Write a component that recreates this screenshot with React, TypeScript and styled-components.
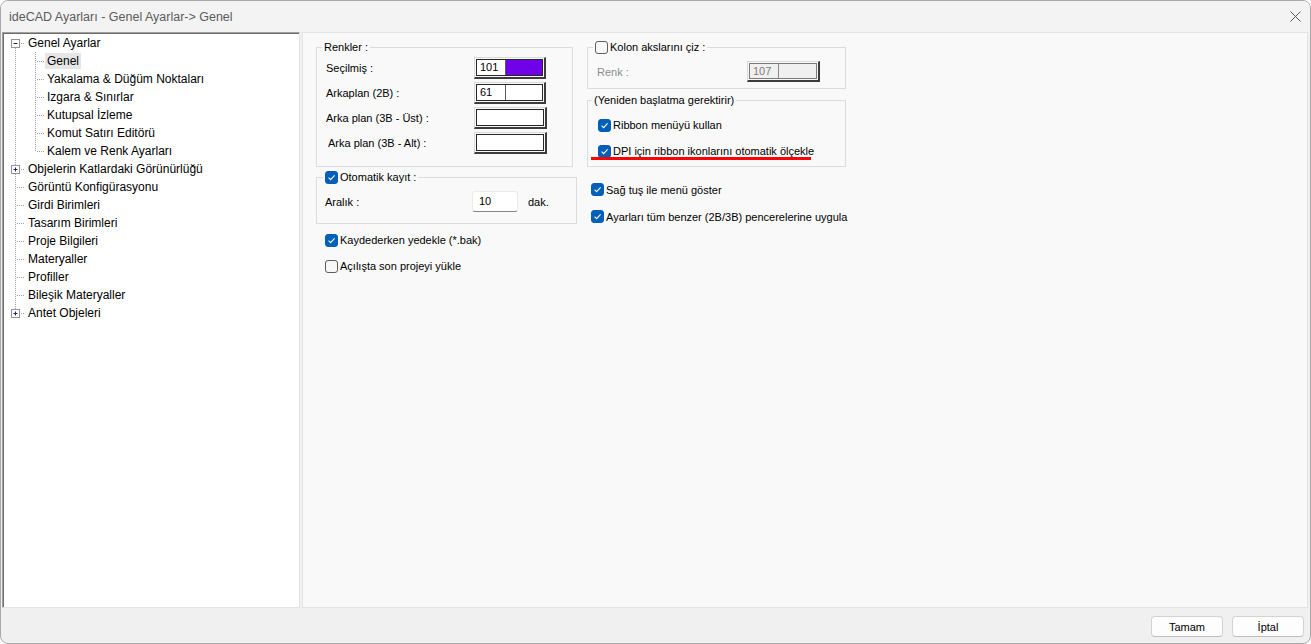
import React from "react";
import styled, { createGlobalStyle } from "styled-components";

const Global = createGlobalStyle`
  html, body { margin: 0; padding: 0; background: #ffffff; }
  body { font-family: "Liberation Sans", Arial, sans-serif; color: #000; }
  * { box-sizing: border-box; }
`;

const Window = styled.div`
  width: 1311px;
  height: 644px;
  border: 1px solid #a9a9a9;
  border-radius: 8px;
  background: #f0f0f0;
  display: flex;
  flex-direction: column;
  overflow: hidden;
`;

const TitleBar = styled.div`
  height: 31px;
  flex: none;
  display: flex;
  align-items: center;
  justify-content: space-between;
  padding: 0 9px 0 8px;
  background: #f3f3f3;
  font-size: 12.5px;
  color: #5c5c5c;
`;

const Main = styled.div`
  flex: 1;
  min-height: 0;
  display: flex;
  gap: 2px;
  padding: 0 2px 0 1px;
`;

const TreePanel = styled.div`
  width: 298px;
  flex: none;
  background: #ffffff;
  border-style: solid;
  border-width: 1px;
  border-color: #a0a0a0 #e3e3e3 #e3e3e3 #a0a0a0;
  box-shadow: inset 1px 1px 0 #6d6d6d;
  padding: 1px 0 0 1px;
`;

const TreeRow = styled.div`
  height: 18px;
  display: flex;
  align-items: center;
  font-size: 12px;
`;

const TreeLabel = styled.span<{ $selected?: boolean }>`
  height: 16px;
  line-height: 16px;
  padding: 0 2px;
  white-space: nowrap;
  background: ${(p) => (p.$selected ? "#e6e6e6" : "transparent")};
`;

const ContentPanel = styled.div`
  flex: 1;
  background: #f9f9f9;
  border: 1px solid #e3e3e3;
  display: flex;
  gap: 10px;
  padding: 7px 0 0 13px;
  font-size: 11px;
`;

const Column = styled.div<{ $w: number }>`
  width: ${(p) => p.$w}px;
  flex: none;
  display: flex;
  flex-direction: column;
  align-items: flex-start;
`;

const Group = styled.fieldset<{ $w: number; $h: number; $pad: string; $mt?: number }>`
  margin: ${(p) => p.$mt ?? 0}px 0 0 0;
  width: ${(p) => p.$w}px;
  height: ${(p) => p.$h}px;
  min-width: 0;
  border: 1px solid #dcdcdc;
  padding: ${(p) => p.$pad};
`;

const Legend = styled.legend<{ $ml: number }>`
  margin-left: ${(p) => p.$ml}px;
  padding: 0 2px;
  height: 14px;
  line-height: 14px;
  display: flex;
  align-items: center;
  gap: 2px;
  font-size: 11px;
  white-space: nowrap;
`;

const FieldGrid = styled.div<{ $cols: string; $row: number }>`
  display: grid;
  grid-template-columns: ${(p) => p.$cols};
  grid-auto-rows: ${(p) => p.$row}px;
  align-items: center;
`;

const FieldLabel = styled.span<{ $muted?: boolean; $indent?: number }>`
  padding-left: ${(p) => p.$indent ?? 0}px;
  color: ${(p) => (p.$muted ? "#8d8d8d" : "#000")};
  white-space: nowrap;
`;

const Swatch = styled.div<{ $h?: number; $w?: number }>`
  width: ${(p) => p.$w ?? 73}px;
  height: ${(p) => p.$h ?? 22}px;
  border-style: solid;
  border-width: 1px 2px 2px 1px;
  border-color: #d9d9d9 #3c3c3c #3c3c3c #d9d9d9;
  padding: 1px;
`;

const SwatchInner = styled.div<{ $disabled?: boolean }>`
  height: 100%;
  display: flex;
  border: 1px solid ${(p) => (p.$disabled ? "#7a7a7a" : "#262626")};
  background: ${(p) => (p.$disabled ? "#f0f0f0" : "#ffffff")};
`;

const SwatchNum = styled.span<{ $disabled?: boolean }>`
  width: 29px;
  flex: none;
  border-right: 1px solid ${(p) => (p.$disabled ? "#8a8a8a" : "#5a5a5a")};
  padding-left: 3px;
  font-size: 11px;
  line-height: 15px;
  color: ${(p) => (p.$disabled ? "#7d7d7d" : "#000")};
`;

const SwatchFill = styled.span<{ $color: string }>`
  flex: 1;
  background: ${(p) => p.$color};
`;

const NumberInput = styled.div`
  width: 46px;
  height: 21px;
  background: #ffffff;
  border: 1px solid #ececec;
  border-bottom-color: #868686;
  border-radius: 3px;
  padding-left: 6px;
  line-height: 19px;
  font-size: 11px;
`;

const CheckRow = styled.div<{ $h: number; $pl: number }>`
  position: relative;
  height: ${(p) => p.$h}px;
  padding-left: ${(p) => p.$pl}px;
  display: flex;
  align-items: center;
  gap: 2px;
  white-space: nowrap;
`;

const Box = styled.span<{ $checked?: boolean }>`
  width: 13px;
  height: 13px;
  flex: none;
  border-radius: 3px;
  display: inline-flex;
  align-items: center;
  justify-content: center;
  background: ${(p) => (p.$checked ? "#005fb8" : "#f7f7f7")};
  border: 1px solid ${(p) => (p.$checked ? "#005fb8" : "#5e5e5e")};
`;

const Underline = styled.span`
  position: absolute;
  left: -7px;
  top: 19px;
  width: 220px;
  height: 3px;
  background: #ff0000;
`;

const Footer = styled.div`
  height: 35px;
  flex: none;
  display: flex;
  justify-content: flex-end;
  align-items: flex-start;
  gap: 9px;
  padding: 8px 6px 0 0;
`;

const Button = styled.button`
  width: 72px;
  height: 21px;
  background: #fdfdfd;
  border: 1px solid #d3d3d3;
  border-bottom-color: #bdbdbd;
  border-radius: 4px;
  font-family: "Liberation Sans", Arial, sans-serif;
  font-size: 11px;
  color: #000;
  padding: 0;
`;

const Check = ({ checked }: { checked?: boolean }) => (
  <Box $checked={checked}>
    {checked && (
      <svg width="9" height="9" viewBox="0 0 9 9">
        <path d="M1.6 4.7 L3.6 6.6 L7.6 2.4" fill="none" stroke="#ffffff" strokeWidth="1.1" />
      </svg>
    )}
  </Box>
);

const CloseIcon = () => (
  <svg width="11" height="11" viewBox="0 0 11 11">
    <path d="M0.5 0.5 L10.5 10.5 M10.5 0.5 L0.5 10.5" stroke="#5a5a5a" strokeWidth="1" />
  </svg>
);

type Item = {
  label: string;
  level: 0 | 1;
  expander?: "minus" | "plus";
  first?: boolean;
  last?: boolean;
  lastChild?: boolean;
  selected?: boolean;
};

const items: Item[] = [
  { label: "Genel Ayarlar", level: 0, expander: "minus", first: true },
  { label: "Genel", level: 1, selected: true },
  { label: "Yakalama & Düğüm Noktaları", level: 1 },
  { label: "Izgara & Sınırlar", level: 1 },
  { label: "Kutupsal İzleme", level: 1 },
  { label: "Komut Satırı Editörü", level: 1 },
  { label: "Kalem ve Renk Ayarları", level: 1, lastChild: true },
  { label: "Objelerin Katlardaki Görünürlüğü", level: 0, expander: "plus" },
  { label: "Görüntü Konfigürasyonu", level: 0 },
  { label: "Girdi Birimleri", level: 0 },
  { label: "Tasarım Birimleri", level: 0 },
  { label: "Proje Bilgileri", level: 0 },
  { label: "Materyaller", level: 0 },
  { label: "Profiller", level: 0 },
  { label: "Bileşik Materyaller", level: 0 },
  { label: "Antet Objeleri", level: 0, expander: "plus", last: true },
];

const DOT = "#a0a0a0";

const Guides = ({ item }: { item: Item }) => {
  const w = item.level === 0 ? 22 : 41;
  const parts: React.ReactNode[] = [];
  if (item.level === 0) {
    if (item.expander) {
      if (!item.first) parts.push(<line key="a" x1="11.5" y1="0" x2="11.5" y2="5" />);
      if (!item.last) parts.push(<line key="b" x1="11.5" y1="14" x2="11.5" y2="18" />);
      parts.push(<line key="h" x1="17" y1="9.5" x2="21" y2="9.5" />);
    } else {
      parts.push(<line key="v" x1="11.5" y1="0" x2="11.5" y2={item.last ? 10 : 18} />);
      parts.push(<line key="h" x1="13" y1="9.5" x2="21" y2="9.5" />);
    }
  } else {
    parts.push(<line key="t" x1="11.5" y1="0" x2="11.5" y2="18" />);
    parts.push(<line key="v" x1="31.5" y1="0" x2="31.5" y2={item.lastChild ? 10 : 18} />);
    parts.push(<line key="h" x1="33" y1="9.5" x2="40" y2="9.5" />);
  }
  return (
    <svg width={w} height="18" viewBox={`0 0 ${w} 18`} style={{ flex: "none" }}>
      <g stroke={DOT} strokeWidth="1" strokeDasharray="1 1">
        {parts}
      </g>
      {item.expander && (
        <g>
          <rect x="7.5" y="5.5" width="8" height="8" fill="#ffffff" stroke="#939393" />
          <line x1="9.5" y1="9.5" x2="13.5" y2="9.5" stroke="#222266" />
          {item.expander === "plus" && (
            <line x1="11.5" y1="7.5" x2="11.5" y2="11.5" stroke="#222266" />
          )}
        </g>
      )}
    </svg>
  );
};

export default function App() {
  return (
    <>
      <Global />
      <Window>
        <TitleBar>
          <span>ideCAD Ayarları - Genel Ayarlar-&gt; Genel</span>
          <CloseIcon />
        </TitleBar>
        <Main>
          <TreePanel>
            {items.map((it) => (
              <TreeRow key={it.label}>
                <Guides item={it} />
                <TreeLabel $selected={it.selected}>{it.label}</TreeLabel>
              </TreeRow>
            ))}
          </TreePanel>
          <ContentPanel>
            <Column $w={261}>
              <Group $w={257} $h={127} $pad="1px 0 0 9px">
                <Legend $ml={-4}>Renkler :</Legend>
                <FieldGrid $cols="148px 73px" $row={25}>
                  <FieldLabel>Seçilmiş :</FieldLabel>
                  <Swatch $w={72}>
                    <SwatchInner>
                      <SwatchNum>101</SwatchNum>
                      <SwatchFill $color="#6f00e8" />
                    </SwatchInner>
                  </Swatch>
                  <FieldLabel>Arkaplan (2B) :</FieldLabel>
                  <Swatch $w={72}>
                    <SwatchInner>
                      <SwatchNum>61</SwatchNum>
                      <SwatchFill $color="#ffffff" />
                    </SwatchInner>
                  </Swatch>
                  <FieldLabel>Arka plan (3B - Üst) :</FieldLabel>
                  <Swatch>
                    <SwatchInner />
                  </Swatch>
                  <FieldLabel $indent={2}>Arka plan (3B - Alt) :</FieldLabel>
                  <Swatch>
                    <SwatchInner />
                  </Swatch>
                </FieldGrid>
              </Group>
              <Group $w={261} $h={54} $pad="7px 0 0 8px" $mt={3}>
                <Legend $ml={-2}>
                  <Check checked />
                  <span>Otomatik kayıt :</span>
                </Legend>
                <FieldGrid $cols="147px 46px auto" $row={21}>
                  <FieldLabel>Aralık :</FieldLabel>
                  <NumberInput>10</NumberInput>
                  <FieldLabel $indent={10}>dak.</FieldLabel>
                </FieldGrid>
              </Group>
              <CheckRow $h={26} $pl={9} style={{ marginTop: 3 }}>
                <Check checked />
                <span>Kaydederken yedekle (*.bak)</span>
              </CheckRow>
              <CheckRow $h={26} $pl={9}>
                <Check />
                <span>Açılışta son projeyi yükle</span>
              </CheckRow>
            </Column>
            <Column $w={259}>
              <Group $w={259} $h={49} $pad="7px 0 0 9px">
                <Legend $ml={-4}>
                  <Check />
                  <span>Kolon akslarını çiz :</span>
                </Legend>
                <FieldGrid $cols="150px 73px" $row={21}>
                  <FieldLabel $muted>Renk :</FieldLabel>
                  <Swatch $h={21}>
                    <SwatchInner $disabled>
                      <SwatchNum $disabled>107</SwatchNum>
                      <SwatchFill $color="#f0f0f0" />
                    </SwatchInner>
                  </Swatch>
                </FieldGrid>
              </Group>
              <Group $w={259} $h={74} $pad="5px 0 0 10px" $mt={4}>
                <Legend $ml={-6}>(Yeniden başlatma gerektirir)</Legend>
                <CheckRow $h={26} $pl={0}>
                  <Check checked />
                  <span>Ribbon menüyü kullan</span>
                </CheckRow>
                <CheckRow $h={26} $pl={0}>
                  <Check checked />
                  <span>DPI için ribbon ikonlarını otomatik ölçekle</span>
                  <Underline />
                </CheckRow>
              </Group>
              <CheckRow $h={27} $pl={4} style={{ marginTop: 9 }}>
                <Check checked />
                <span>Sağ tuş ile menü göster</span>
              </CheckRow>
              <CheckRow $h={27} $pl={4}>
                <Check checked />
                <span>Ayarları tüm benzer (2B/3B) pencerelerine uygula</span>
              </CheckRow>
            </Column>
          </ContentPanel>
        </Main>
        <Footer>
          <Button>Tamam</Button>
          <Button>İptal</Button>
        </Footer>
      </Window>
    </>
  );
}
